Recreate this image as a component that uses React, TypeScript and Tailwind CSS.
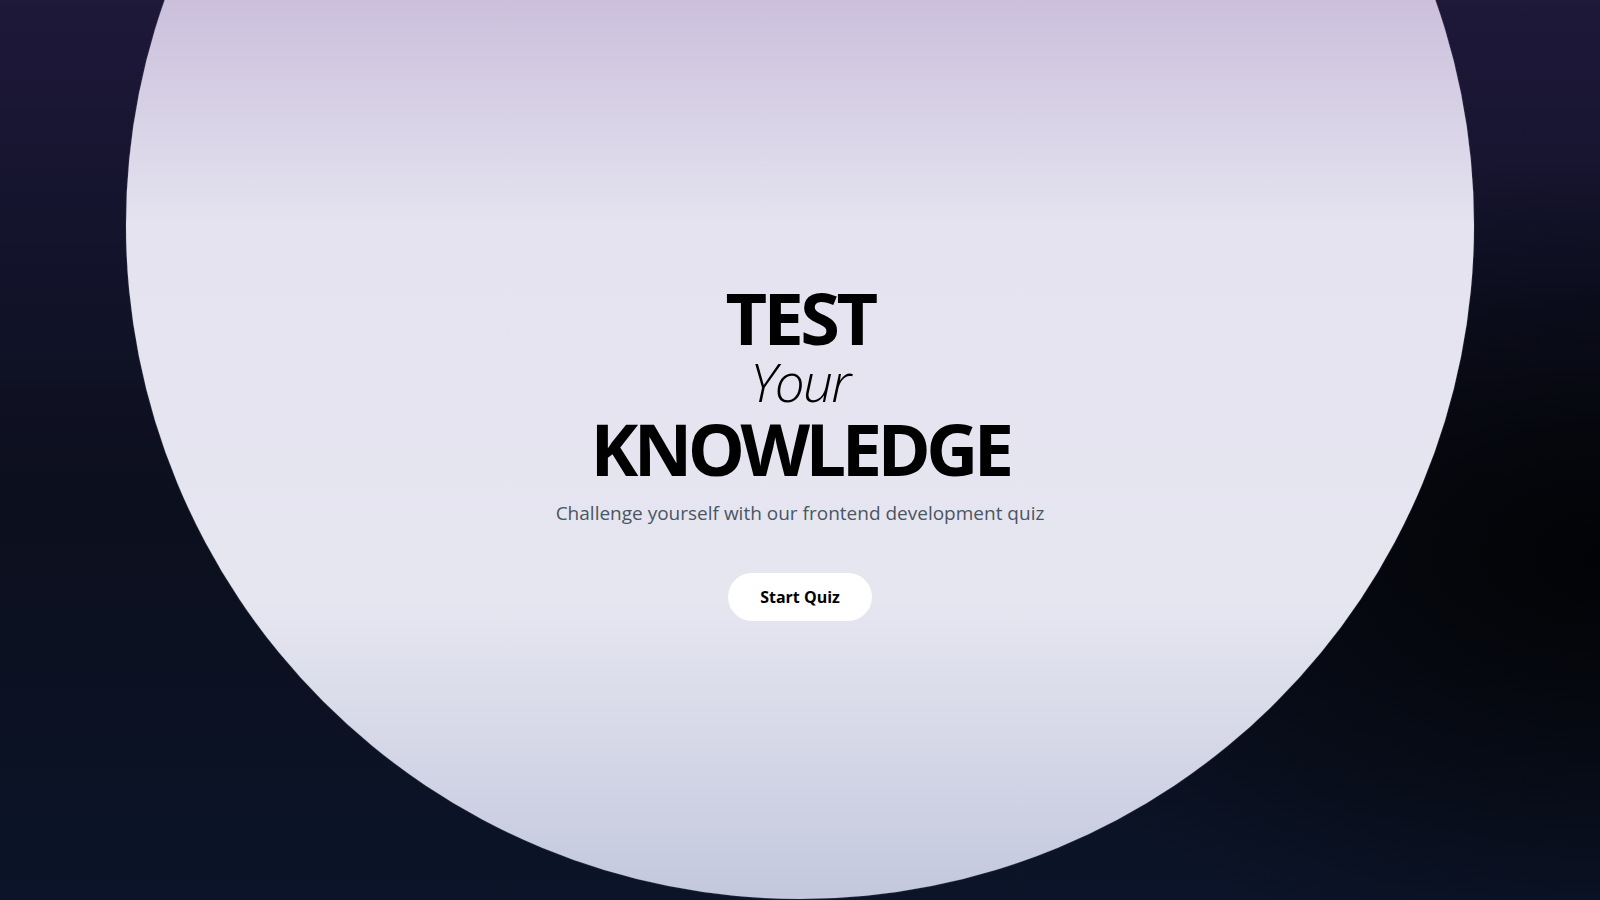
import React from "react";

export default function App() {
  return (
    <div className="relative h-screen w-full overflow-hidden bg-[radial-gradient(ellipse_40%_45%_at_100%_62%,#020305_0%,rgba(2,3,5,0)_100%),linear-gradient(to_bottom,#1e1839_0%,#12132a_30%,#0c0f1d_55%,#0b1428_100%)]">
      <div className="absolute left-1/2 top-[-449px] ml-[-674px] h-[1348px] w-[1348px] rounded-full bg-[linear-gradient(to_bottom,#9f8fc0_0%,#cbbfdc_33%,#e4e3ef_50%,#e6e6f1_78%,#c3c8dd_100%)] shadow-[0_0_1px_rgba(255,255,255,0.6)]" />
      <main className="relative flex h-full flex-col items-center justify-center pt-[5px] font-['Open_Sans',sans-serif]">
        <h1 className="flex flex-col items-center text-black">
          <span className="text-[72px] font-bold leading-[64px] tracking-[-0.05em]">TEST</span>
          <span className="pt-[2px] text-[53px] font-light italic leading-[61px] tracking-[-0.03em]">Your</span>
          <span className="pt-[5px] text-[72px] font-bold leading-[63px] tracking-[-0.063em]">KNOWLEDGE</span>
        </h1>
        <p className="mt-[19px] text-[19px] leading-7 text-[#4b5563]">
          Challenge yourself with our frontend development quiz
        </p>
        <button className="mt-[46px] rounded-full bg-white px-8 py-2.5 text-[16px] font-bold leading-7 text-black">
          Start Quiz
        </button>
      </main>
    </div>
  );
}
